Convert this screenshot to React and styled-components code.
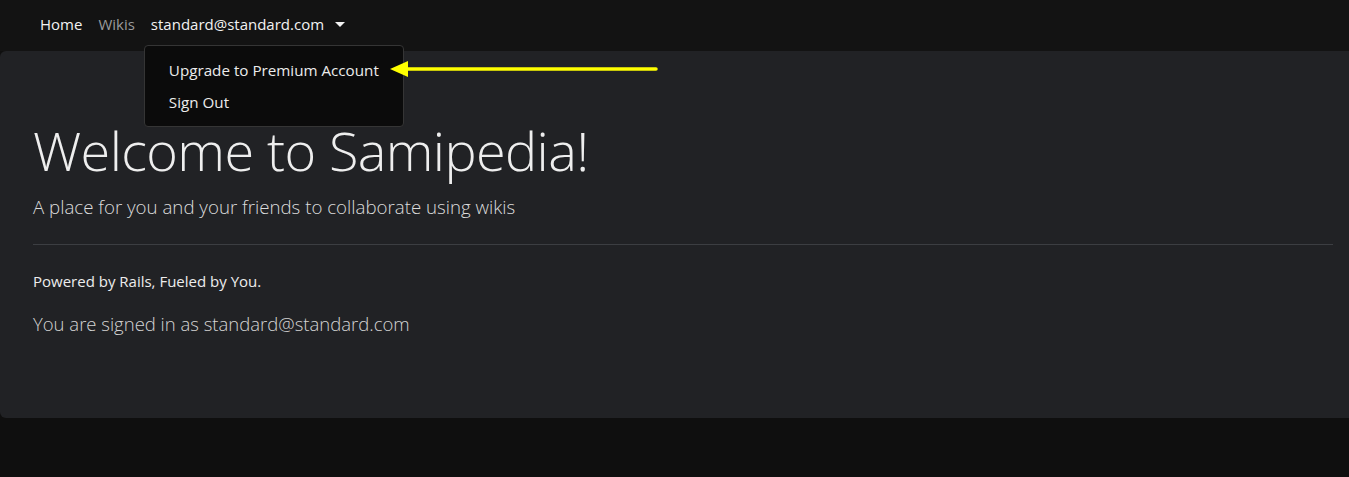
import React from 'react';
import styled, { createGlobalStyle } from 'styled-components';

const GlobalStyle = createGlobalStyle`
  body {
    margin: 0;
    background-color: #0f0f0f;
    color: #dee2e6;
    font-family: "Open Sans", "Noto Sans", sans-serif;
  }
`

const Navbar = styled.nav`
  height: 51px;
  background-color: #131313;
  display: flex;
  align-items: flex-start;
  padding: 0 0 0 32px;
`

const NavList = styled.ul`
  display: flex;
  list-style: none;
  margin: 0;
  padding: 0;
`

const NavItem = styled.li`
  position: relative;
`

const NavLink = styled.a`
  display: flex;
  align-items: center;
  padding: 12px 8px 10px;
  font-size: 15px;
  line-height: 24px;
  color: ${props => props.muted ? '#9a9b9c' : '#f2f2f2'};
  text-decoration: none;
  cursor: pointer;
`

const Caret = styled.span`
  display: inline-block;
  margin-left: 11px;
  border-top: 5px solid #f2f2f2;
  border-left: 5px solid transparent;
  border-right: 5px solid transparent;
`

const DropdownMenu = styled.ul`
  position: absolute;
  top: 45px;
  left: 1px;
  width: 258px;
  margin: 0;
  padding: 8px 0;
  list-style: none;
  background-color: #0b0b0b;
  border: 1px solid #353535;
  border-radius: 4px;
  z-index: 10;
`

const DropdownItem = styled.li`
  padding: 4px 24px;
  font-size: 15.2px;
  line-height: 24px;
  color: #ececec;
  white-space: nowrap;
`

const Jumbotron = styled.section`
  background-color: #212225;
  border-radius: 6px 0 0 6px;
  padding: 66px 16px 62px 33px;
  height: 239px;
`

const Heading = styled.h1`
  margin: 0 0 9px;
  font-size: 54px;
  font-weight: 300;
  line-height: 66px;
  color: #eeeeee;
  letter-spacing: -0.6px;
`

const Lead = styled.p`
  margin: 0;
  font-size: 18.7px;
  font-weight: 300;
  line-height: 30px;
  color: #dcdcdc;
`

const Divider = styled.hr`
  margin: 22px 0 24px;
  border: 0;
  border-top: 1px solid #3c3e42;
`

const Small = styled.p`
  margin: 0 0 16px;
  font-size: 15px;
  line-height: 24px;
  color: #ededed;
`

const Signed = styled.p`
  margin: 0;
  font-size: 18.5px;
  font-weight: 300;
  line-height: 30px;
  color: #d4d4d4;
`

const Annotation = styled.svg`
  position: absolute;
  top: 60px;
  left: 388px;
  z-index: 20;
`

const App = () => {
  return (
    <>
      <GlobalStyle />
      <Navbar>
        <NavList>
          <NavItem><NavLink>Home</NavLink></NavItem>
          <NavItem><NavLink muted>Wikis</NavLink></NavItem>
          <NavItem>
            <NavLink>standard@standard.com<Caret /></NavLink>
            <DropdownMenu>
              <DropdownItem>Upgrade to Premium Account</DropdownItem>
              <DropdownItem>Sign Out</DropdownItem>
            </DropdownMenu>
          </NavItem>
        </NavList>
      </Navbar>
      <Jumbotron>
        <Heading>Welcome to Samipedia!</Heading>
        <Lead>A place for you and your friends to collaborate using wikis</Lead>
        <Divider />
        <Small>Powered by Rails, Fueled by You.</Small>
        <Signed>You are signed in as standard@standard.com</Signed>
      </Jumbotron>
      <Annotation width="275" height="20" viewBox="0 0 275 20">
        <line x1="18" y1="9" x2="268" y2="9" stroke="#ffff00" strokeWidth="3.5" strokeLinecap="round" />
        <polygon points="2,9 20,1 20,17" fill="#ffff00" />
      </Annotation>
    </>
  )
}

export default App;
